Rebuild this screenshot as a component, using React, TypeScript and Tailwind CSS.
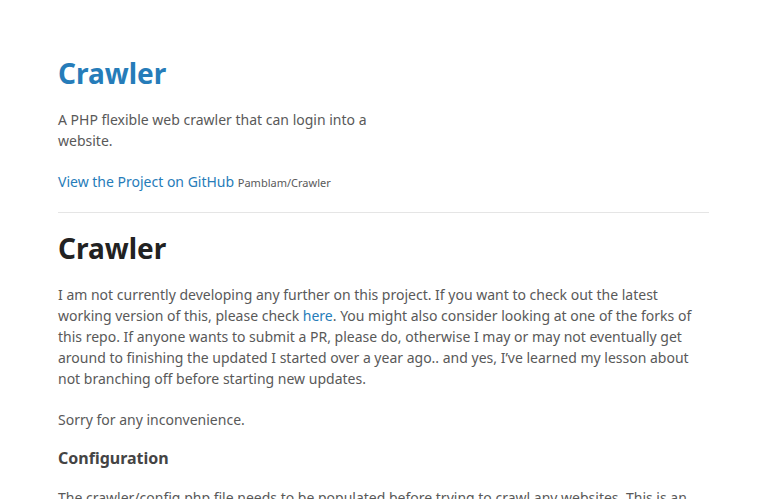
export default function App() {
  return (
    <div className="min-h-[499px] bg-white text-[14px] leading-[1.5] text-[#595959]" style={{ fontFamily: '"Noto Sans", "Liberation Sans", sans-serif' }}>
      <div className="m-2 p-[50px]">
        <header className="pr-[320px]">
          <h1 className="mb-5 text-[28px] font-bold leading-[1.1]">
            <a className="text-[#267cb9]">Crawler</a>
          </h1>
          <p className="mb-5">A PHP flexible web crawler that can login into a website.</p>
          <p className="mb-5">
            <a className="text-[#267cb9]">View the Project on GitHub</a>{" "}
            <small className="text-[11px]">Pamblam/Crawler</small>
          </p>
        </header>
        <section className="border-t border-[#e5e5e5] pt-5">
          <h1 className="mb-5 text-[28px] font-bold leading-[1.1] text-[#222]">Crawler</h1>
          <p className="mb-5">
            I am not currently developing any further on this project. If you want to check out the latest working version of this, please check{" "}
            <a className="text-[#267cb9]">here</a>. You might also consider looking at one of the forks of this repo. If anyone wants to submit a PR, please do, otherwise I may or may not eventually get around to finishing the updated I started over a year ago.. and yes, I’ve learned my lesson about not branching off before starting new updates.
          </p>
          <p className="mb-5">Sorry for any inconvenience.</p>
          <h3 className="mb-5 text-[16px] font-bold leading-[1.1] text-[#444]">Configuration</h3>
          <p className="mb-5">
            The crawler/config.php file needs to be populated before trying to crawl any websites. This is an example of the configuration file.
          </p>
        </section>
      </div>
    </div>
  );
}
